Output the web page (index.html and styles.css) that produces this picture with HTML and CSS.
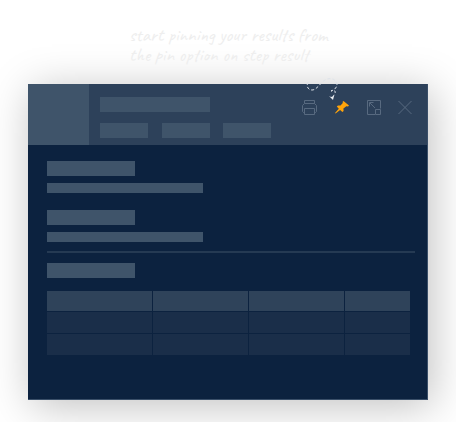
FILE: index.html
```
<!DOCTYPE html>
<html lang="en">
<head>
<meta charset="utf-8">
<title>Pinned results</title>
<link rel="stylesheet" href="styles.css">
</head>
<body>
<main class="page">
  <p class="hint">start pinning your results from<br>the pin option on step result</p>
  <section class="card">
    <header class="card-header">
      <div class="thumb"></div>
      <div class="heading">
        <div class="bar bar-title"></div>
        <div class="tags">
          <div class="bar tag"></div>
          <div class="bar tag"></div>
          <div class="bar tag"></div>
        </div>
      </div>
      <div class="actions">
        <button type="button" class="action" aria-label="Print">
          <svg viewBox="0 0 16 16"><path d="M3.500 4.500v-3h10v3M3.500 13.500h-1l-1-1v-6l2-2h10l2 2v6l-1 1h-1M3.500 9.500h10v6h-10z"/></svg>
        </button>
        <button type="button" class="action action-pin" aria-label="Pin">
          <svg viewBox="-1 -1 16 16"><path d="M9.500 1l5.500 4.500-1 .9-1.700-.1L9.400 8.500l.2 2.400-1.200 1.200-2.300-2.200L1.600 13.400 1 13l3.800-4.300L2.800 6.600 4 5.500l2.500.1L8.800 3 8.600 1.800z"/></svg>
          <svg class="trail" viewBox="0 0 36 26"><path class="dash" d="M4 6C2 10 4 14 8 14c5 0 8-7 13-10 5-3 11-1 12 4 0 4-3 6-6 7 3-1 5 0 4 2l-2 4"/><path class="tip" d="M25 20l2 1 3-1-1 4z"/></svg>
        </button>
        <button type="button" class="action" aria-label="Expand">
          <svg viewBox="0 0 16 16"><path d="M10 15.500H2.500v-14h13v8M10.500 10.500h5v5h-5zM10 9L5 4M4.500 7.500v-4h4"/></svg>
        </button>
        <button type="button" class="action" aria-label="Close">
          <svg viewBox="0 0 16 16"><path d="M1.500 2l13 13M14.500 2l-13 13"/></svg>
        </button>
      </div>
    </header>
    <div class="card-body">
      <div class="group">
        <div class="bar label"></div>
        <div class="bar value"></div>
      </div>
      <div class="group">
        <div class="bar label"></div>
        <div class="bar value"></div>
      </div>
      <hr class="rule">
      <div class="bar label"></div>
      <table class="grid" aria-label="Results">
        <colgroup><col class="col-wide"><col class="col"><col class="col"><col></colgroup>
        <thead><tr><th></th><th></th><th></th><th></th></tr></thead>
        <tbody>
          <tr><td></td><td></td><td></td><td></td></tr>
          <tr><td></td><td></td><td></td><td></td></tr>
        </tbody>
      </table>
    </div>
  </section>
</main>
</body>
</html>
```
FILE: styles.css
```
* { box-sizing: border-box; }
body {
  margin: 0;
  background: #fff;
  overflow: hidden;
}
.page { padding: 25px 28px 22px; }
.hint {
  position: relative;
  z-index: 1;
  margin: 0 0 19px 101px;
  font: 400 19px/20px Caveat, cursive;
  color: #eee;
  white-space: nowrap;
}
.card {
  background: #0c223f;
  border: solid #3a4f69;
  border-width: 0 1px 1px 0;
  box-shadow: 4px 6px 40px rgba(0, 0, 0, .25);
}
.card-header {
  display: flex;
  min-height: 61px;
  background: #2d415a;
}
.bar, .thumb { background: #3f546a; }
.thumb { width: 61px; }
.heading {
  width: 171px;
  margin: 13px 0 0 11px;
}
.bar { height: 15px; }
.bar-title { width: 110px; }
.tags {
  display: flex;
  justify-content: space-between;
  margin-top: 11px;
}
.tag { width: 48px; }
.actions {
  display: flex;
  align-items: flex-start;
  gap: 16px;
  margin: 15px 14px 0 auto;
}
.action {
  position: relative;
  width: 16px;
  height: 16px;
  padding: 0;
  border: 0;
  background: none;
}
.action svg {
  display: block;
  width: 16px;
  height: 16px;
  fill: none;
  stroke: #586a80;
}
.action-pin svg {
  overflow: visible;
  fill: #ffa40a;
  stroke: none;
}
.action-pin .trail {
  position: absolute;
  left: -29px;
  top: -23px;
  width: 36px;
  height: 26px;
  fill: none;
  stroke: #dfe4ea;
}
.dash { stroke-dasharray: 3 2; }
.tip {
  fill: #edf0f3;
  stroke: none;
}
.card-body { padding: 16px 12px 43px 19px; }
.group { margin-bottom: 17px; }
.group + .rule { margin-top: -8px; }
.label { width: 88px; }
.value {
  width: 156px;
  height: 10px;
  margin-top: 7px;
}
.rule {
  height: 2px;
  margin: 0 0 10px;
  border: 0;
  background: #253a53;
}
.grid {
  width: calc(100% - 4px);
  margin-top: 13px;
  table-layout: fixed;
  border-spacing: 0;
}
.col-wide { width: 29%; }
.col { width: 26.400%; }
.grid th, .grid td {
  height: 22px;
  padding: 0;
  border: solid #0c223f;
  border-width: 0 1px 1px 0;
  background: #1a2e49;
}
.grid th {
  height: 21px;
  background: #2f435a;
}
```
